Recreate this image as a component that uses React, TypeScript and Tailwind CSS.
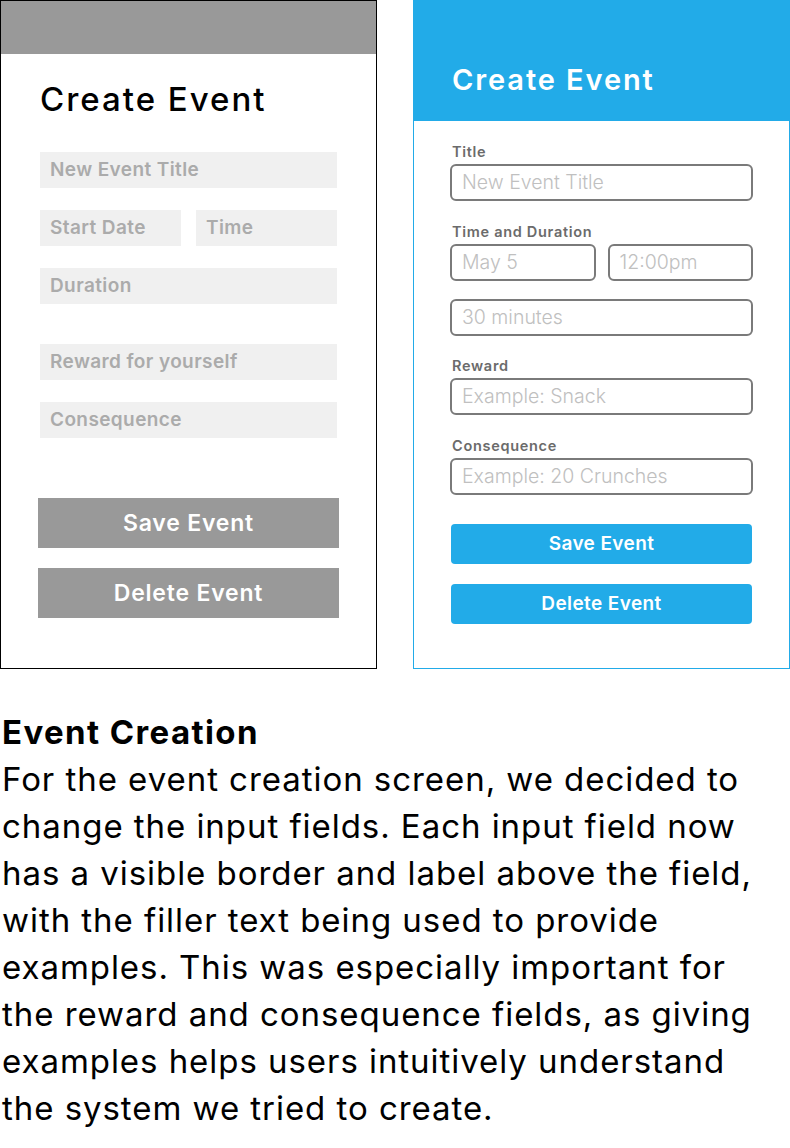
import React from 'react'

const font = { fontFamily: 'Inter, "Noto Sans", sans-serif' }

const OldCard = () => {
	return (
		<div className="w-[377px] h-[669px] border border-black flex flex-col">
			<div className="h-[53px] bg-[#999999]"></div>
			<div className="px-[39px] pt-[25px] flex flex-col">
				<div className="text-[33px] leading-[40px] font-medium text-black tracking-[2px]">Create Event</div>
				<div className="mt-[33px] flex flex-col">
					<OldInput text="New Event Title" />
					<div className="mt-[22px] flex gap-[15px]">
						<div className="w-[141px]"><OldInput text="Start Date" /></div>
						<div className="w-[141px]"><OldInput text="Time" /></div>
					</div>
					<div className="mt-[22px]"><OldInput text="Duration" /></div>
					<div className="mt-[40px]"><OldInput text="Reward for yourself" /></div>
					<div className="mt-[22px]"><OldInput text="Consequence" /></div>
				</div>
				<div className="mt-[60px] -mx-[2px] flex flex-col gap-[20px]">
					<OldButton text="Save Event" />
					<OldButton text="Delete Event" />
				</div>
			</div>
		</div>
	)
}

const OldInput = ({ text }: { text: string }) => {
	return (
		<div className="h-[36px] bg-[#f0f0f0] px-[10px] flex items-center text-[19px] font-semibold tracking-[0.4px] text-[#ababab]">{text}</div>
	)
}

const OldButton = ({ text }: { text: string }) => {
	return (
		<div className="h-[50px] bg-[#999999] flex items-center justify-center text-[23px] font-semibold tracking-[0.8px] text-white">{text}</div>
	)
}

const NewCard = () => {
	return (
		<div className="w-[377px] h-[669px] border border-[#22abe8] flex flex-col">
			<div className="h-[121px] -mx-px -mt-px bg-[#22abe8] flex items-center px-[39px] pt-[38px]">
				<div className="text-[29px] font-semibold tracking-[1.9px] text-white">Create Event</div>
			</div>
			<div className="px-[36px] pt-[22px] flex flex-col">
				<NewLabel text="Title" />
				<NewInput text="New Event Title" />
				<div className="mt-[22px]"><NewLabel text="Time and Duration" /></div>
				<div className="flex gap-[12px]">
					<div className="w-[146px]"><NewInput text="May 5" /></div>
					<div className="w-[146px]"><NewInput text="12:00pm" /></div>
				</div>
				<div className="mt-[15px]"><NewInput text="30 minutes" /></div>
				<div className="mt-[21px]"><NewLabel text="Reward" /></div>
				<NewInput text="Example: Snack" />
				<div className="mt-[22px]"><NewLabel text="Consequence" /></div>
				<NewInput text="Example: 20 Crunches" />
				<div className="mt-[29px] px-px flex flex-col gap-[20px]">
					<NewButton text="Save Event" />
					<NewButton text="Delete Event" />
				</div>
			</div>
		</div>
	)
}

const NewLabel = ({ text }: { text: string }) => {
	return <div className="h-[18px] text-[14.5px] leading-[18px] font-semibold tracking-[0.7px] text-[#6b6b6b] pl-[2px]">{text}</div>
}

const NewInput = ({ text }: { text: string }) => {
	return (
		<div className="mt-[3px] h-[37px] border-2 border-[#7a7a7a] rounded-[6px] px-[10px] flex items-center text-[19.5px] font-light text-[#c0c0c0]">{text}</div>
	)
}

const NewButton = ({ text }: { text: string }) => {
	return (
		<div className="h-[40px] bg-[#22abe8] rounded-[4px] flex items-center justify-center text-[19px] font-semibold tracking-[0.4px] text-white">{text}</div>
	)
}

export default function App() {
	return (
		<div className="w-[790px] h-[1148px] bg-white overflow-hidden" style={font}>
			<div className="flex justify-between">
				<OldCard />
				<NewCard />
			</div>
			<div className="mt-[40px] pl-[2px] text-black whitespace-nowrap">
				<div className="text-[33px] leading-[47px] font-bold tracking-[1.4px]">Event Creation</div>
				<div className="text-[33px] leading-[47px] tracking-[0.95px]">
					For the event creation screen, we decided to<br />
					change the input fields. Each input field now<br />
					has a visible border and label above the field,<br />
					with the filler text being used to provide<br />
					examples. This was especially important for<br />
					the reward and consequence fields, as giving<br />
					examples helps users intuitively understand<br />
					the system we tried to create.
				</div>
			</div>
		</div>
	)
}
